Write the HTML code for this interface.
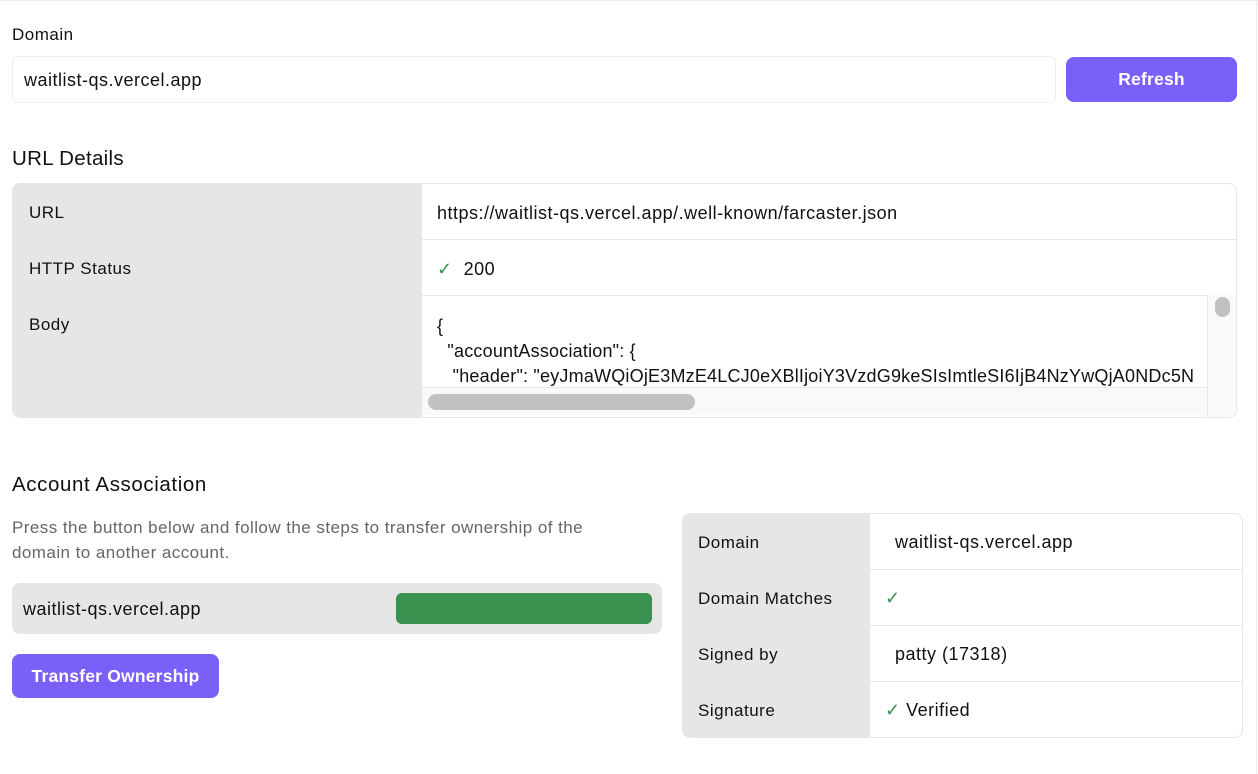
<!DOCTYPE html>
<html><head><style>
*{box-sizing:border-box;margin:0;padding:0}
body{width:1258px;height:774px;background:#fff;font-family:"Liberation Sans",sans-serif;color:#111;position:relative;overflow:hidden;font-size:17px;letter-spacing:0.5px}
.a{position:absolute}
.lbl{font-weight:500;font-size:17px}
.v{font-size:18px;letter-spacing:0.5px}
.h{font-size:20.5px;letter-spacing:0.3px}
.btn{background:#7a5ff8;color:#fff;font-weight:bold;border-radius:8px;display:flex;align-items:center;justify-content:center;font-size:17.5px;letter-spacing:0.2px}
.ck{color:#3a9150}
</style></head><body>
<div class="a" style="left:0;top:0;width:1258px;height:1px;background:#eee"></div>
<div class="a" style="left:1256px;top:0;width:1px;height:774px;background:#eee"></div>
<div class="a lbl" style="left:12px;top:25px">Domain</div>
<div class="a v" style="left:12px;top:56px;width:1044px;height:47px;border:1px solid #eee;border-radius:6px;padding:13px 11px">waitlist-qs.vercel.app</div>
<div class="a btn" style="left:1066px;top:57px;width:171px;height:45px">Refresh</div>
<div class="a h" style="left:12px;top:147px">URL Details</div>
<div class="a" style="left:12px;top:183px;width:1225px;height:235px;border:1px solid #e6e6e6;border-radius:8px;overflow:hidden">
 <div class="a" style="left:0;top:0;width:409px;height:235px;background:#e6e6e6"></div>
 <div class="a" style="left:16px;top:19px">URL</div>
 <div class="a" style="left:16px;top:75px">HTTP Status</div>
 <div class="a" style="left:16px;top:131px">Body</div>
 <div class="a" style="left:409px;top:55px;width:816px;height:1px;background:#e6e6e6"></div>
 <div class="a" style="left:409px;top:111px;width:816px;height:1px;background:#e6e6e6"></div>
 <div class="a v" style="left:424px;top:19px">https://waitlist-qs.vercel.app/.well-known/farcaster.json</div>
 <div class="a v" style="left:424px;top:75px"><span class="ck">✓</span>&nbsp; 200</div>
 <div class="a v" style="left:424px;top:130px;line-height:25px;white-space:pre;width:770px;overflow:hidden;letter-spacing:0.2px">{
  "accountAssociation": {
   "header": "eyJmaWQiOjE3MzE4LCJ0eXBlIjoiY3VzdG9keSIsImtleSI6IjB4NzYwQjA0NDc5N</div>
 <div class="a" style="left:409px;top:203px;width:785px;height:28px;background:#f9f9f9;border-top:1px solid #e8e8e8"></div>
 <div class="a" style="left:415px;top:210px;width:267px;height:16px;border-radius:8px;background:#c1c1c1"></div>
 <div class="a" style="left:1194px;top:111px;width:31px;height:124px;background:#f9f9f9;border-left:1px solid #e8e8e8"></div>
 <div class="a" style="left:1202px;top:113px;width:15px;height:20px;border-radius:8px;background:#c1c1c1"></div>
</div>
<div class="a h" style="left:12px;top:473px;letter-spacing:0.6px">Account Association</div>
<div class="a" style="left:12px;top:515px;color:#666;line-height:25px;width:620px;letter-spacing:0.45px">Press the button below and follow the steps to transfer ownership of the domain to another account.</div>
<div class="a" style="left:12px;top:583px;width:650px;height:51px;background:#e6e6e6;border-radius:8px"></div>
<div class="a v" style="left:23px;top:599px">waitlist-qs.vercel.app</div>
<div class="a" style="left:396px;top:593px;width:256px;height:31px;background:#3a9150;border-radius:6px"></div>
<div class="a btn" style="left:12px;top:654px;width:207px;height:44px">Transfer Ownership</div>
<div class="a" style="left:682px;top:513px;width:561px;height:225px;border:1px solid #e6e6e6;border-radius:8px;overflow:hidden">
 <div class="a" style="left:0;top:0;width:187px;height:225px;background:#e6e6e6"></div>
 <div class="a" style="left:187px;top:55px;width:374px;height:1px;background:#e6e6e6"></div>
 <div class="a" style="left:187px;top:111px;width:374px;height:1px;background:#e6e6e6"></div>
 <div class="a" style="left:187px;top:167px;width:374px;height:1px;background:#e6e6e6"></div>
 <div class="a" style="left:15px;top:19px">Domain</div>
 <div class="a" style="left:15px;top:75px">Domain Matches</div>
 <div class="a" style="left:15px;top:131px">Signed by</div>
 <div class="a" style="left:15px;top:187px">Signature</div>
 <div class="a v" style="left:212px;top:18px">waitlist-qs.vercel.app</div>
 <div class="a ck v" style="left:202px;top:74px">✓</div>
 <div class="a v" style="left:212px;top:130px">patty (17318)</div>
 <div class="a v" style="left:202px;top:186px"><span class="ck">✓</span> Verified</div>
</div>
</body></html>
